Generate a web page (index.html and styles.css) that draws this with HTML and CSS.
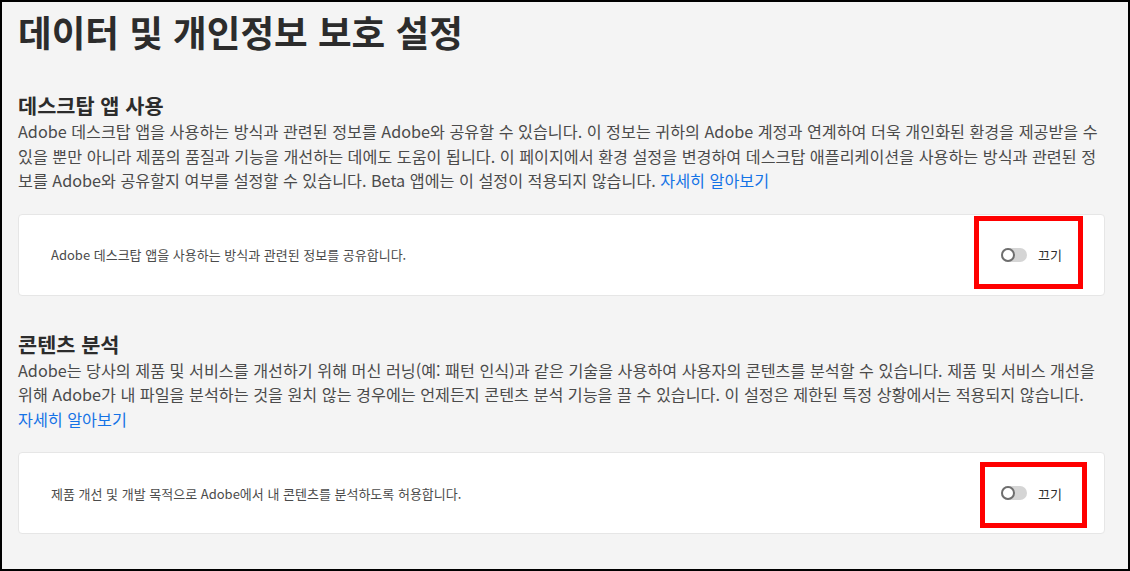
FILE: index.html
```html
<!DOCTYPE html>
<html lang="ko">
<head>
<meta charset="utf-8">
<title>데이터 및 개인정보 보호 설정</title>
<link rel="stylesheet" href="styles.css">
</head>
<body>
<div class="frame">
  <h1 class="title">데이터 및 개인정보 보호 설정</h1>

  <section class="section section-first">
    <h2 class="section-title">데스크탑 앱 사용</h2>
    <p class="desc">Adobe 데스크탑 앱을 사용하는 방식과 관련된 정보를 Adobe와 공유할 수 있습니다. 이 정보는 귀하의 Adobe 계정과 연계하여 더욱 개인화된 환경을 제공받을 수 있을 뿐만 아니라 제품의 품질과 기능을 개선하는 데에도 도움이 됩니다. 이 페이지에서 환경 설정을 변경하여 데스크탑 애플리케이션을 사용하는 방식과 관련된 정보를 Adobe와 공유할지 여부를 설정할 수 있습니다. Beta 앱에는 이 설정이 적용되지 않습니다. <a class="link" href="#">자세히 알아보기</a></p>
    <div class="card">
      <span class="card-text">Adobe 데스크탑 앱을 사용하는 방식과 관련된 정보를 공유합니다.</span>
      <label class="switch">
        <span class="track"><span class="knob"></span></span>
        <span class="switch-label">끄기</span>
      </label>
      <span class="mark mark-1"></span>
    </div>
  </section>

  <section class="section">
    <h2 class="section-title">콘텐츠 분석</h2>
    <p class="desc">Adobe는 당사의 제품 및 서비스를 개선하기 위해 머신 러닝(예: 패턴 인식)과 같은 기술을 사용하여 사용자의 콘텐츠를 분석할 수 있습니다. 제품 및 서비스 개선을 위해 Adobe가 내 파일을 분석하는 것을 원치 않는 경우에는 언제든지 콘텐츠 분석 기능을 끌 수 있습니다. 이 설정은 제한된 특정 상황에서는 적용되지 않습니다. <a class="link" href="#">자세히 알아보기</a></p>
    <div class="card">
      <span class="card-text">제품 개선 및 개발 목적으로 Adobe에서 내 콘텐츠를 분석하도록 허용합니다.</span>
      <label class="switch">
        <span class="track"><span class="knob"></span></span>
        <span class="switch-label">끄기</span>
      </label>
      <span class="mark mark-2"></span>
    </div>
  </section>
</div>
</body>
</html>
```

FILE: styles.css
```css
* { box-sizing: border-box; }

html, body {
  margin: 0;
  padding: 0;
}

body {
  font-family: "Noto Sans CJK KR", "Noto Sans", sans-serif;
  color: #4b4b4b;
}

.frame {
  width: 1130px;
  height: 571px;
  border: 2px solid #000;
  background: #f4f4f4;
  padding: 6px 23px 0 16px;
  overflow: hidden;
}

.title {
  margin: 0;
  font-size: 36.6px;
  line-height: 48px;
  font-weight: 700;
  color: #2c2c2c;
}

.section-first {
  margin-top: 36px;
}

.section {
  margin-bottom: 35px;
}

.section-title {
  margin: 0;
  font-size: 20.8px;
  line-height: 26px;
  font-weight: 700;
  color: #2c2c2c;
}

.desc {
  margin: 1px 0 0;
  font-size: 16.2px;
  line-height: 24.5px;
  color: #4b4b4b;
}

.link {
  color: #1473e6;
  text-decoration: none;
  white-space: nowrap;
}

.card {
  position: relative;
  margin-top: 21px;
  height: 82px;
  background: #fff;
  border: 1px solid #e6e6e6;
  border-radius: 4px;
  display: flex;
  align-items: center;
  justify-content: space-between;
  padding: 0 42px 0 32px;
}

.card-text {
  font-size: 13px;
  color: #4b4b4b;
}

.switch {
  display: flex;
  align-items: center;
  gap: 11px;
}

.track {
  position: relative;
  width: 26px;
  height: 14px;
  border-radius: 7px;
  background: #d5d5d5;
}

.knob {
  position: absolute;
  left: 0;
  top: 0;
  width: 14px;
  height: 14px;
  border-radius: 50%;
  background: #fff;
  border: 2px solid #6e6e6e;
}

.switch-label {
  font-size: 13px;
  color: #2c2c2c;
}

.mark {
  position: absolute;
  border: 5px solid #ff0000;
  pointer-events: none;
}

.mark-1 {
  right: 21px;
  top: 1px;
  width: 109px;
  height: 73px;
}

.mark-2 {
  right: 17px;
  top: 9px;
  width: 107px;
  height: 66px;
}
```
